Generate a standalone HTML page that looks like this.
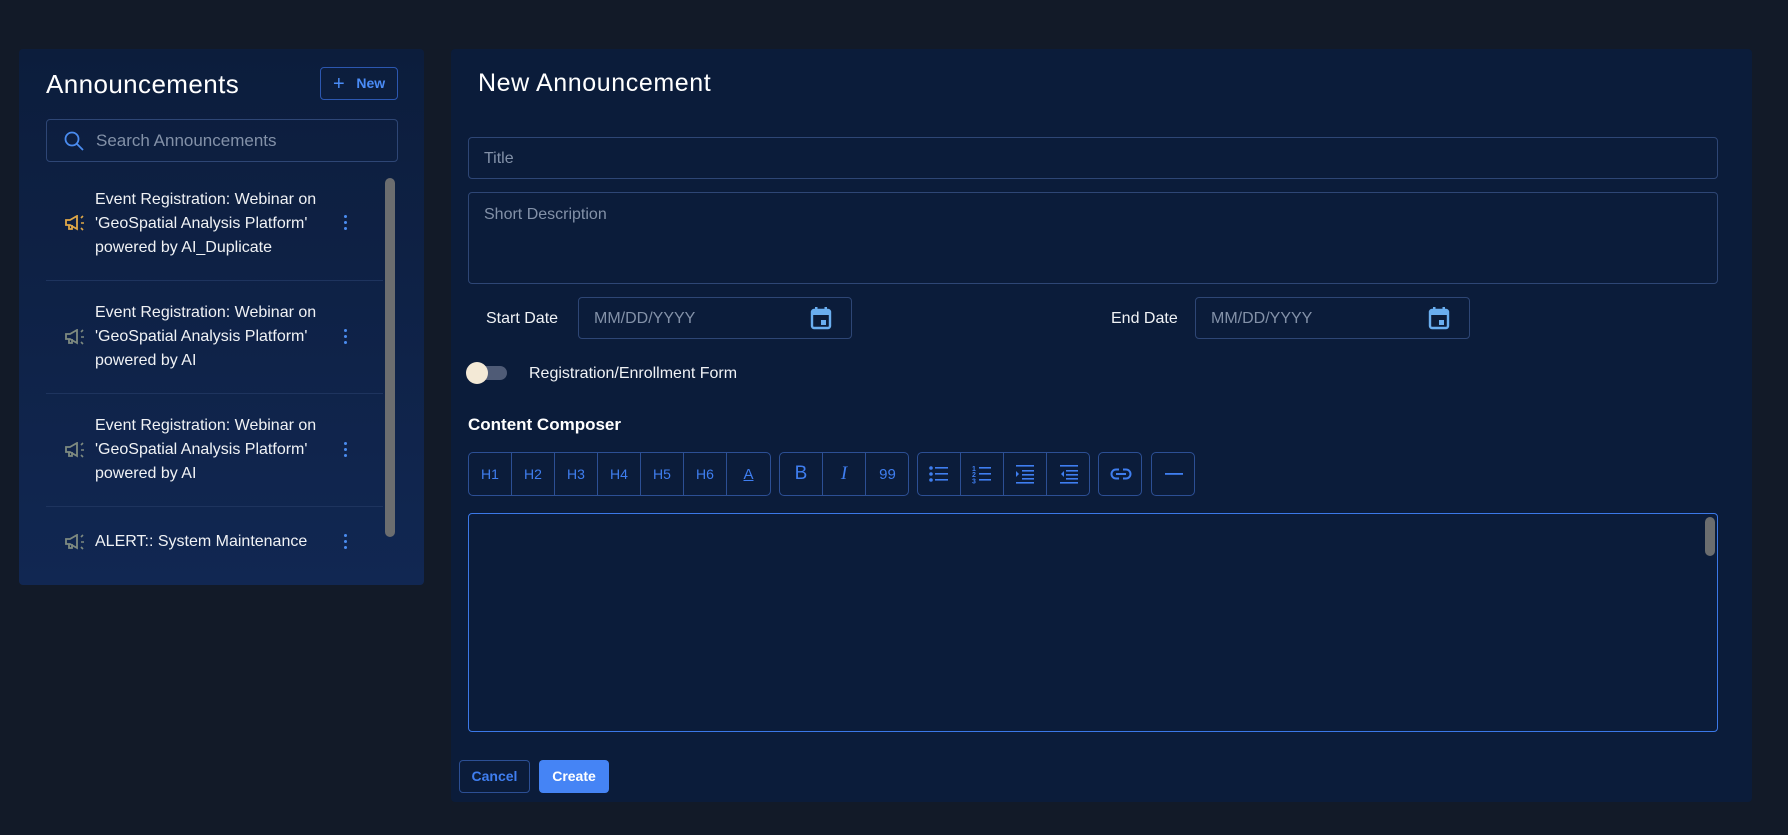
<!DOCTYPE html>
<html><head><meta charset="utf-8"><style>
*{box-sizing:border-box;margin:0;padding:0}
body{width:1788px;height:835px;background:#121a28;font-family:"Liberation Sans",sans-serif;position:relative;overflow:hidden;color:#fff}
.abs{position:absolute}
.lp{left:19px;top:49px;width:405px;height:536px;border-radius:4px;background:linear-gradient(180deg,#0c1d3c 0%,#112752 100%)}
.rp{left:451px;top:49px;width:1301px;height:753px;border-radius:4px;background:#0b1c3a}
.inp{border:1px solid #2e4675;border-radius:4px;color:#8391a8;font-size:16px}
.item{position:absolute;left:95px;font-size:16px;line-height:24px;color:#f0f2f5}
.dots{position:absolute;left:344px;width:3px}
.dots i{display:block;width:3px;height:3px;border-radius:50%;background:#4a8cf0;margin-bottom:3px}
.sep{position:absolute;left:46px;width:337px;height:1px;background:#1e345e}
.tb{position:absolute;top:452px;height:44px;border:1px solid #2c4f94;border-radius:5px;display:flex}
.tb span{flex:0 0 43px;width:43px;border-right:1px solid #2c4f94;color:#3f7ef0;font-size:14px;display:flex;align-items:center;justify-content:center}
.tb span:last-child{border-right:none}
</style></head><body>
<div class="abs lp"></div>
<div class="abs" style="left:46px;top:69px;font-size:26px;letter-spacing:0.4px">Announcements</div>
<div class="abs" style="left:320px;top:67px;width:78px;height:33px;border:1px solid #2c57b0;border-radius:4px;color:#4a8cf7;font-size:14px;font-weight:bold;line-height:31px;padding-left:12px"><span style="font-size:20px;font-weight:normal;vertical-align:-2px">+</span>&nbsp;&nbsp; New</div>
<div class="abs inp" style="left:46px;top:119px;width:352px;height:43px"></div>
<svg class="abs" style="left:63px;top:130px" width="22" height="22" viewBox="0 0 22 22"><circle cx="9" cy="9" r="6.5" fill="none" stroke="#4a8cf0" stroke-width="1.8"/><path d="M14 14l6 6" stroke="#4a8cf0" stroke-width="1.8"/></svg>
<div class="abs" style="left:96px;top:131px;font-size:17px;color:#8391a8">Search Announcements</div>
<div class="abs" style="left:385px;top:178px;width:10px;height:359px;border-radius:5px;background:#6b6d6f"></div>

<svg class="abs" style="left:65px;top:215px" width="22" height="16" viewBox="0 0 22 16"><path d="M1 5h4l7-4v13l-7-4H1z M4 10v4h3v-4" fill="none" stroke="#e0a848" stroke-width="1.8"/><path d="M16 3l2-2M16 8h3M16 13l2 2" stroke="#e0a848" stroke-width="1.6"/></svg>
<div class="item" style="top:188px">Event Registration: Webinar on<br>'GeoSpatial Analysis Platform'<br>powered by AI_Duplicate</div>
<div class="dots" style="top:215px"><i></i><i></i><i></i></div>
<div class="sep" style="top:280px"></div>

<svg class="abs" style="left:65px;top:329px" width="22" height="16" viewBox="0 0 22 16"><path d="M1 5h4l7-4v13l-7-4H1z M4 10v4h3v-4" fill="none" stroke="#7e8a80" stroke-width="1.8"/><path d="M16 3l2-2M16 8h3M16 13l2 2" stroke="#7e8a80" stroke-width="1.6"/></svg>
<div class="item" style="top:301px">Event Registration: Webinar on<br>'GeoSpatial Analysis Platform'<br>powered by AI</div>
<div class="dots" style="top:329px"><i></i><i></i><i></i></div>
<div class="sep" style="top:393px"></div>

<svg class="abs" style="left:65px;top:442px" width="22" height="16" viewBox="0 0 22 16"><path d="M1 5h4l7-4v13l-7-4H1z M4 10v4h3v-4" fill="none" stroke="#7e8a80" stroke-width="1.8"/><path d="M16 3l2-2M16 8h3M16 13l2 2" stroke="#7e8a80" stroke-width="1.6"/></svg>
<div class="item" style="top:414px">Event Registration: Webinar on<br>'GeoSpatial Analysis Platform'<br>powered by AI</div>
<div class="dots" style="top:442px"><i></i><i></i><i></i></div>
<div class="sep" style="top:506px"></div>

<svg class="abs" style="left:65px;top:534px" width="22" height="16" viewBox="0 0 22 16"><path d="M1 5h4l7-4v13l-7-4H1z M4 10v4h3v-4" fill="none" stroke="#7e8a80" stroke-width="1.8"/><path d="M16 3l2-2M16 8h3M16 13l2 2" stroke="#7e8a80" stroke-width="1.6"/></svg>
<div class="item" style="top:530px">ALERT:: System Maintenance</div>
<div class="dots" style="top:534px"><i></i><i></i><i></i></div>

<div class="abs rp"></div>
<div class="abs" style="left:478px;top:69px;font-size:25px;letter-spacing:0.6px">New Announcement</div>
<div class="abs inp" style="left:468px;top:137px;width:1250px;height:42px;padding:12px 15px">Title</div>
<div class="abs inp" style="left:468px;top:192px;width:1250px;height:92px;padding:13px 15px">Short Description</div>
<div class="abs" style="left:486px;top:310px;font-size:16px;color:#f0f2f5">Start Date</div>
<div class="abs inp" style="left:578px;top:297px;width:274px;height:42px;padding:12px 15px">MM/DD/YYYY</div>
<svg class="abs" style="left:810px;top:306px" width="22" height="24" viewBox="0 0 22 24"><rect x="2" y="4" width="18" height="18" rx="2" fill="none" stroke="#6aaef0" stroke-width="2.4"/><rect x="2" y="4" width="18" height="5" fill="#6aaef0"/><rect x="5" y="1" width="2.5" height="5" fill="#6aaef0"/><rect x="14.5" y="1" width="2.5" height="5" fill="#6aaef0"/><rect x="11" y="14" width="5" height="5" fill="#6aaef0"/></svg>
<div class="abs" style="left:1111px;top:310px;font-size:16px;color:#f0f2f5">End Date</div>
<div class="abs inp" style="left:1195px;top:297px;width:275px;height:42px;padding:12px 15px">MM/DD/YYYY</div>
<svg class="abs" style="left:1428px;top:306px" width="22" height="24" viewBox="0 0 22 24"><rect x="2" y="4" width="18" height="18" rx="2" fill="none" stroke="#6aaef0" stroke-width="2.4"/><rect x="2" y="4" width="18" height="5" fill="#6aaef0"/><rect x="5" y="1" width="2.5" height="5" fill="#6aaef0"/><rect x="14.5" y="1" width="2.5" height="5" fill="#6aaef0"/><rect x="11" y="14" width="5" height="5" fill="#6aaef0"/></svg>
<div class="abs" style="left:469px;top:366px;width:38px;height:14px;border-radius:7px;background:#4f5b76"></div>
<div class="abs" style="left:466px;top:362px;width:22px;height:22px;border-radius:50%;background:#f3e9d6"></div>
<div class="abs" style="left:529px;top:365px;font-size:16px;color:#f0f2f5">Registration/Enrollment Form</div>
<div class="abs" style="left:468px;top:415px;font-size:17px;font-weight:bold">Content Composer</div>
<div class="tb" style="left:468px;width:303px"><span>H1</span><span>H2</span><span>H3</span><span>H4</span><span>H5</span><span>H6</span><span style="text-decoration:underline;font-size:15px">A</span></div>
<div class="tb" style="left:779px;width:130px"><span style="font-size:19px">B</span><span style="font-style:italic;font-size:19px;font-family:'Liberation Serif',serif">I</span><span style="font-size:15px">99</span></div>
<div class="tb" style="left:917px;width:173px">
<span><svg width="20" height="18" viewBox="0 0 20 18" fill="#3f7ef0"><circle cx="2" cy="3" r="1.8"/><circle cx="2" cy="9" r="1.8"/><circle cx="2" cy="15" r="1.8"/><rect x="6" y="2" width="13" height="1.6"/><rect x="6" y="8" width="13" height="1.6"/><rect x="6" y="14" width="13" height="1.6"/></svg></span>
<span><svg width="20" height="20" viewBox="0 0 20 20" fill="#3f7ef0"><text x="0" y="7" font-size="7" font-family="Liberation Sans" font-weight="bold">1</text><text x="0" y="13" font-size="7" font-family="Liberation Sans" font-weight="bold">2</text><text x="0" y="19.5" font-size="7" font-family="Liberation Sans" font-weight="bold">3</text><rect x="7" y="3" width="12" height="1.6"/><rect x="7" y="9" width="12" height="1.6"/><rect x="7" y="15" width="12" height="1.6"/></svg></span>
<span><svg width="20" height="20" viewBox="0 0 20 20" fill="#3f7ef0"><rect x="1" y="1" width="18" height="1.6"/><path d="M1 7l3 3-3 3z"/><rect x="7" y="6" width="12" height="1.6"/><rect x="7" y="10" width="12" height="1.6"/><rect x="7" y="14" width="12" height="1.6"/><rect x="1" y="18" width="18" height="1.6"/></svg></span>
<span><svg width="20" height="20" viewBox="0 0 20 20" fill="#3f7ef0"><rect x="1" y="1" width="18" height="1.6"/><path d="M5 7l-3 3 3 3z"/><rect x="7" y="6" width="12" height="1.6"/><rect x="7" y="10" width="12" height="1.6"/><rect x="7" y="14" width="12" height="1.6"/><rect x="1" y="18" width="18" height="1.6"/></svg></span>
</div>
<div class="tb" style="left:1098px;width:44px"><span><svg width="22" height="12" viewBox="0 0 22 12"><rect x="1.5" y="1.5" width="19" height="9" rx="4.5" fill="none" stroke="#3f7ef0" stroke-width="2"/><rect x="6" y="5" width="10" height="2" fill="#3f7ef0"/><rect x="9" y="0" width="4" height="3" fill="#0b1c3a"/><rect x="9" y="9" width="4" height="3" fill="#0b1c3a"/></svg></span></div>
<div class="tb" style="left:1151px;width:44px"><span><svg width="18" height="4"><rect y="1" width="18" height="1.8" fill="#3f7ef0"/></svg></span></div>
<div class="abs" style="left:468px;top:513px;width:1250px;height:219px;border:1.5px solid #3b78e8;border-radius:4px"></div>
<div class="abs" style="left:1705px;top:517px;width:10px;height:39px;border-radius:5px;background:#6b6d6f"></div>
<div class="abs" style="left:459px;top:760px;width:71px;height:33px;border:1px solid #2c4f94;border-radius:4px;color:#3f7ef0;font-size:14px;font-weight:bold;text-align:center;line-height:31px">Cancel</div>
<div class="abs" style="left:539px;top:760px;width:70px;height:33px;background:#4584f5;border-radius:4px;color:#fff;font-size:14px;font-weight:bold;text-align:center;line-height:33px">Create</div>
</body></html>
